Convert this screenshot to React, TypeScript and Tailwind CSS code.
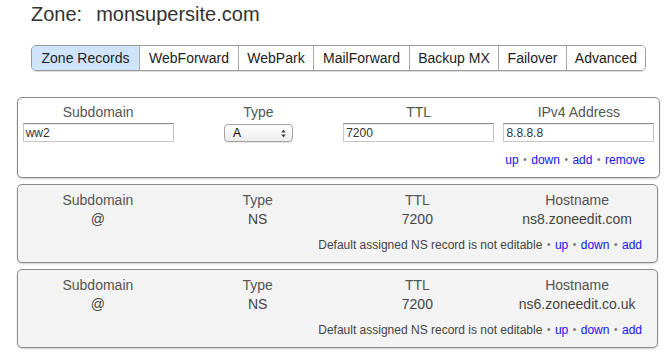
import React from "react";

const tabs = [
    { label: "Zone Records", w: "w-[107px]", active: true },
    { label: "WebForward", w: "w-[99px]" },
    { label: "WebPark", w: "w-[75px]" },
    { label: "MailForward", w: "w-[96px]" },
    { label: "Backup MX", w: "w-[89px]" },
    { label: "Failover", w: "w-[68px]" },
    { label: "Advanced", w: "w-[79px]" },
];

const nsRecords = [
    { sub: "@", type: "NS", ttl: "7200", host: "ns8.zoneedit.com" },
    { sub: "@", type: "NS", ttl: "7200", host: "ns6.zoneedit.co.uk" },
];

function Sep() {
    return <span className="text-[#777] text-[10px] mx-[4.5px] align-[1px]">•</span>;
}

function Link({ children }: { children: React.ReactNode }) {
    return <a className="text-[#1414f0] cursor-pointer">{children}</a>;
}

function TextInput({ value }: { value: string }) {
    return (
        <div className="mx-auto w-[151px] h-[19px] border border-[#c6c6c6] border-t-[#8e8e8e] bg-white shadow-[inset_0_1px_1px_rgba(0,0,0,0.08)] flex items-center pl-[2px] text-[12px] text-[#333]">
            {value}
        </div>
    );
}

function SelectBox({ value }: { value: string }) {
    return (
        <div className="mx-auto mt-[1px] w-[69px] h-[18px] rounded-[4px] border border-[#a3a3a3] bg-gradient-to-b from-white to-[#ececec] shadow-[0_1px_1px_rgba(0,0,0,0.1)] flex items-center justify-between pl-[8px] pr-[6px] text-[12px] text-black">
            <span>{value}</span>
            <svg width="5" height="9" viewBox="0 0 5 9">
                <path d="M2.5 0.5 L4.8 3.5 L0.2 3.5 Z" fill="#444" />
                <path d="M2.5 8.5 L4.8 5.5 L0.2 5.5 Z" fill="#444" />
            </svg>
        </div>
    );
}

export default function App() {
    return (
        <div className="w-[671px] h-[357px] bg-white overflow-hidden font-['Liberation_Sans',Arial,sans-serif]">
            <h1 className="mt-[2px] pl-[31px] text-[20px] leading-[24px] text-[#333]">
                Zone:<span className="ml-[14px]">monsupersite.com</span>
            </h1>

            {/* tab bar */}
            <div className="mt-[19px] ml-[31px] inline-flex h-[26px] border border-[#9a9a9a] rounded-[5px] overflow-hidden shadow-[0_1px_1px_rgba(0,0,0,0.15)] text-[14px] text-[#222] align-top">
                {tabs.map((t, i) => (
                    <div
                        key={t.label}
                        className={`${t.w} flex items-center justify-center ${i > 0 ? "border-l border-[#a8a8a8]" : ""} ${t.active ? "bg-[#cfe4fa]" : "bg-white"}`}
                    >
                        {t.label}
                    </div>
                ))}
            </div>

            {/* editable record */}
            <div className="mt-[26px] ml-[17px] w-[643px] border border-[#8c8c8c] rounded-[5px] bg-white shadow-[0_1px_2px_rgba(0,0,0,0.2)] pt-[6px] pb-[9px]">
                <div className="grid grid-cols-4 text-[14px] leading-[17px] text-[#555] text-center">
                    <div>Subdomain</div>
                    <div>Type</div>
                    <div>TTL</div>
                    <div>IPv4 Address</div>
                </div>
                <div className="grid grid-cols-4 mt-[2px]">
                    <TextInput value="ww2" />
                    <SelectBox value="A" />
                    <TextInput value="7200" />
                    <TextInput value="8.8.8.8" />
                </div>
                <div className="mt-[10px] pr-[14px] text-right text-[12px] leading-[16px]">
                    <Link>up</Link>
                    <Sep />
                    <Link>down</Link>
                    <Sep />
                    <Link>add</Link>
                    <Sep />
                    <Link>remove</Link>
                </div>
            </div>

            {/* default NS records */}
            {nsRecords.map((r) => (
                <div
                    key={r.host}
                    className="mt-[6px] ml-[17px] w-[641px] border border-[#8c8c8c] rounded-[5px] bg-[#f3f3f3] shadow-[0_1px_2px_rgba(0,0,0,0.2)] pt-[7px] pb-[9px]"
                >
                    <div className="grid grid-cols-4 text-[14px] leading-[17px] text-[#555] text-center">
                        <div>Subdomain</div>
                        <div>Type</div>
                        <div>TTL</div>
                        <div>Hostname</div>
                    </div>
                    <div className="grid grid-cols-4 mt-[2px] text-[14px] leading-[17px] text-[#444] text-center">
                        <div>{r.sub}</div>
                        <div>{r.type}</div>
                        <div>{r.ttl}</div>
                        <div>{r.host}</div>
                    </div>
                    <div className="mt-[9px] pr-[15px] text-right text-[12px] leading-[16px] text-[#444]">
                        Default assigned NS record is not editable
                        <Sep />
                        <Link>up</Link>
                        <Sep />
                        <Link>down</Link>
                        <Sep />
                        <Link>add</Link>
                    </div>
                </div>
            ))}
        </div>
    );
}
